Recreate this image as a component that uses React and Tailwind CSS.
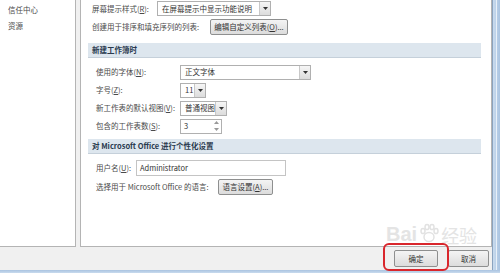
import React from 'react'

const font = { fontFamily: '"Noto Sans CJK SC", "Liberation Sans", sans-serif' }

function Arrow() {
  return (
    <span className="flex h-full w-[11px] flex-none items-center justify-center border-l border-[#c8c8c8] bg-gradient-to-b from-[#f6f6f6] to-[#dcdcdc]">
      <svg width="5" height="3" viewBox="0 0 5 3"><path d="M0 0h5L2.5 3z" fill="#333" /></svg>
    </span>
  )
}

function Select({ value, w }) {
  return (
    <div className={`flex h-[15px] flex-none items-center border border-[#b0b0b0] bg-white ${w}`}>
      <span className="flex-1 whitespace-nowrap pl-[4px] text-[7.5px] leading-none text-[#333]">{value}</span>
      <Arrow />
    </div>
  )
}

function Btn({ children, w, cls = '' }) {
  return (
    <div className={`flex h-[16px] flex-none items-center justify-center whitespace-nowrap rounded-[2px] border border-[#8e8f8f] bg-gradient-to-b from-[#f4f4f4] to-[#dcdcdc] text-[7.5px] leading-none text-[#333] ${w} ${cls}`}>
      {children}
    </div>
  )
}

function Header({ children }) {
  return (
    <div className="mr-[10px] flex h-[15px] items-center whitespace-nowrap border-b border-[#c5d0da] bg-[#dde6ee] pl-[4px] text-[7.5px] font-bold leading-none text-[#2a3a4e]">
      {children}
    </div>
  )
}

function Row({ label, children, lw = 'w-[84px]', cls = '' }) {
  return (
    <div className={`flex h-[18px] items-center ${cls}`}>
      <span className={`flex-none whitespace-nowrap text-[7.5px] leading-none text-[#4a4a4a] ${lw}`}>{label}</span>
      {children}
    </div>
  )
}

function Paw() {
  return (
    <svg width="22" height="22" viewBox="0 0 22 22" fill="none" stroke="#e2e2e2" strokeWidth="1.5">
      <ellipse cx="11" cy="15" rx="5" ry="4.5" />
      <ellipse cx="5" cy="9" rx="2" ry="2.6" />
      <ellipse cx="9" cy="5" rx="2" ry="2.6" />
      <ellipse cx="14" cy="5" rx="2" ry="2.6" />
      <ellipse cx="18" cy="9" rx="2" ry="2.6" />
    </svg>
  )
}

export default function App() {
  return (
    <div style={font} className="relative flex h-[273px] w-[500px] flex-col overflow-hidden bg-[#f0f0f0]">
      <div className="flex flex-1">
        <div className="flex flex-1 flex-col">
          <div className="flex h-[247px] gap-[4px]">
            <div className="flex w-[76px] flex-col gap-[8px] border-b border-r border-[#b4b4b4] bg-white pl-[8px] pt-[6px] text-[7.5px] leading-none text-[#4a4a4a]">
              <span>信任中心</span>
              <span>资源</span>
            </div>
            <div className="flex flex-1 flex-col border-b border-l border-r border-[#b4b4b4] bg-white pl-[7px]">
              <div className="flex h-[17px] items-center pl-[4px]">
                <span className="w-[65px] flex-none whitespace-nowrap text-[7.5px] leading-none text-[#4a4a4a]">屏幕提示样式(<u>R</u>):</span>
                <Select value="在屏幕提示中显示功能说明" w="w-[114px]" />
              </div>
              <div className="flex h-[20px] items-center pl-[4px]">
                <span className="w-[118px] flex-none whitespace-nowrap text-[7.5px] leading-none text-[#4a4a4a]">创建用于排序和填充序列的列表:</span>
                <Btn w="w-[78px]">编辑自定义列表(<u>O</u>)...</Btn>
              </div>
              <div className="mt-[6px]">
                <Header>新建工作簿时</Header>
              </div>
              <div className="flex flex-col pl-[8px] pt-[5px]">
                <Row label={<>使用的字体(<u>N</u>):</>}>
                  <Select value="正文字体" w="w-[131px]" />
                </Row>
                <Row label={<>字号(<u>Z</u>):</>}>
                  <Select value="11" w="w-[26px]" />
                </Row>
                <Row label={<>新工作表的默认视图(<u>V</u>):</>}>
                  <Select value="普通视图" w="w-[47px]" />
                </Row>
                <Row label={<>包含的工作表数(<u>S</u>):</>}>
                  <div className="flex h-[15px] w-[42px] flex-none items-center border border-[#b0b0b0] bg-white">
                    <span className="flex-1 pl-[3px] text-[7.5px] leading-none text-[#333]">3</span>
                    <span className="flex h-full w-[9px] flex-col">
                      <span className="flex flex-1 items-center justify-center">
                        <svg width="5" height="3" viewBox="0 0 5 3"><path d="M0 3h5L2.5 0z" fill="#999" /></svg>
                      </span>
                      <span className="flex flex-1 items-center justify-center">
                        <svg width="5" height="3" viewBox="0 0 5 3"><path d="M0 0h5L2.5 3z" fill="#999" /></svg>
                      </span>
                    </span>
                  </div>
                </Row>
              </div>
              <div className="mt-[4px]">
                <Header>对 Microsoft Office 进行个性化设置</Header>
              </div>
              <div className="flex flex-col pl-[8px] pt-[5px]">
                <Row label={<>用户名(<u>U</u>):</>} lw="w-[40px]">
                  <div className="flex h-[16px] w-[150px] items-center border border-[#c4c4c4] bg-white pl-[3px] text-[7.5px] leading-none text-[#333]">
                    Administrator
                  </div>
                </Row>
                <Row label="选择用于 Microsoft Office 的语言:" lw="w-[122px]" cls="mt-[1px]">
                  <Btn w="w-[55px]" cls="border-[#3c7fb1]">语言设置(<u>A</u>)...</Btn>
                </Row>
              </div>
            </div>
          </div>
          <div className="flex flex-1 items-center justify-end gap-[10px] pr-[3px]">
            <Btn w="w-[44px]" cls="h-[17px]">确定</Btn>
            <Btn w="w-[41px]" cls="h-[17px]">取消</Btn>
          </div>
        </div>
        <div className="flex w-[8px] border-l border-[#8aa3bf] bg-gradient-to-r from-[#c9dbee] to-[#a9c3e0]">
          <div className="ml-[3px] w-[1px] bg-[#e8f0f8]" />
        </div>
      </div>
      <div className="h-[3px] bg-gradient-to-b from-[#a9c3e0] to-[#c9dbee]" />
      <div className="pointer-events-none absolute left-[386px] top-[222px] flex items-end gap-[1px] text-[#e4e4e4]">
        <span className="text-[20px] font-bold leading-none" style={{ fontFamily: '"Liberation Sans", sans-serif' }}>Bai</span>
        <Paw />
        <span className="text-[18px] leading-none">经验</span>
      </div>
      <div className="pointer-events-none absolute left-[383px] top-[243px] h-[28px] w-[66px] rounded-[6px] border-[2px] border-[#d9262c]" />
    </div>
  )
}
